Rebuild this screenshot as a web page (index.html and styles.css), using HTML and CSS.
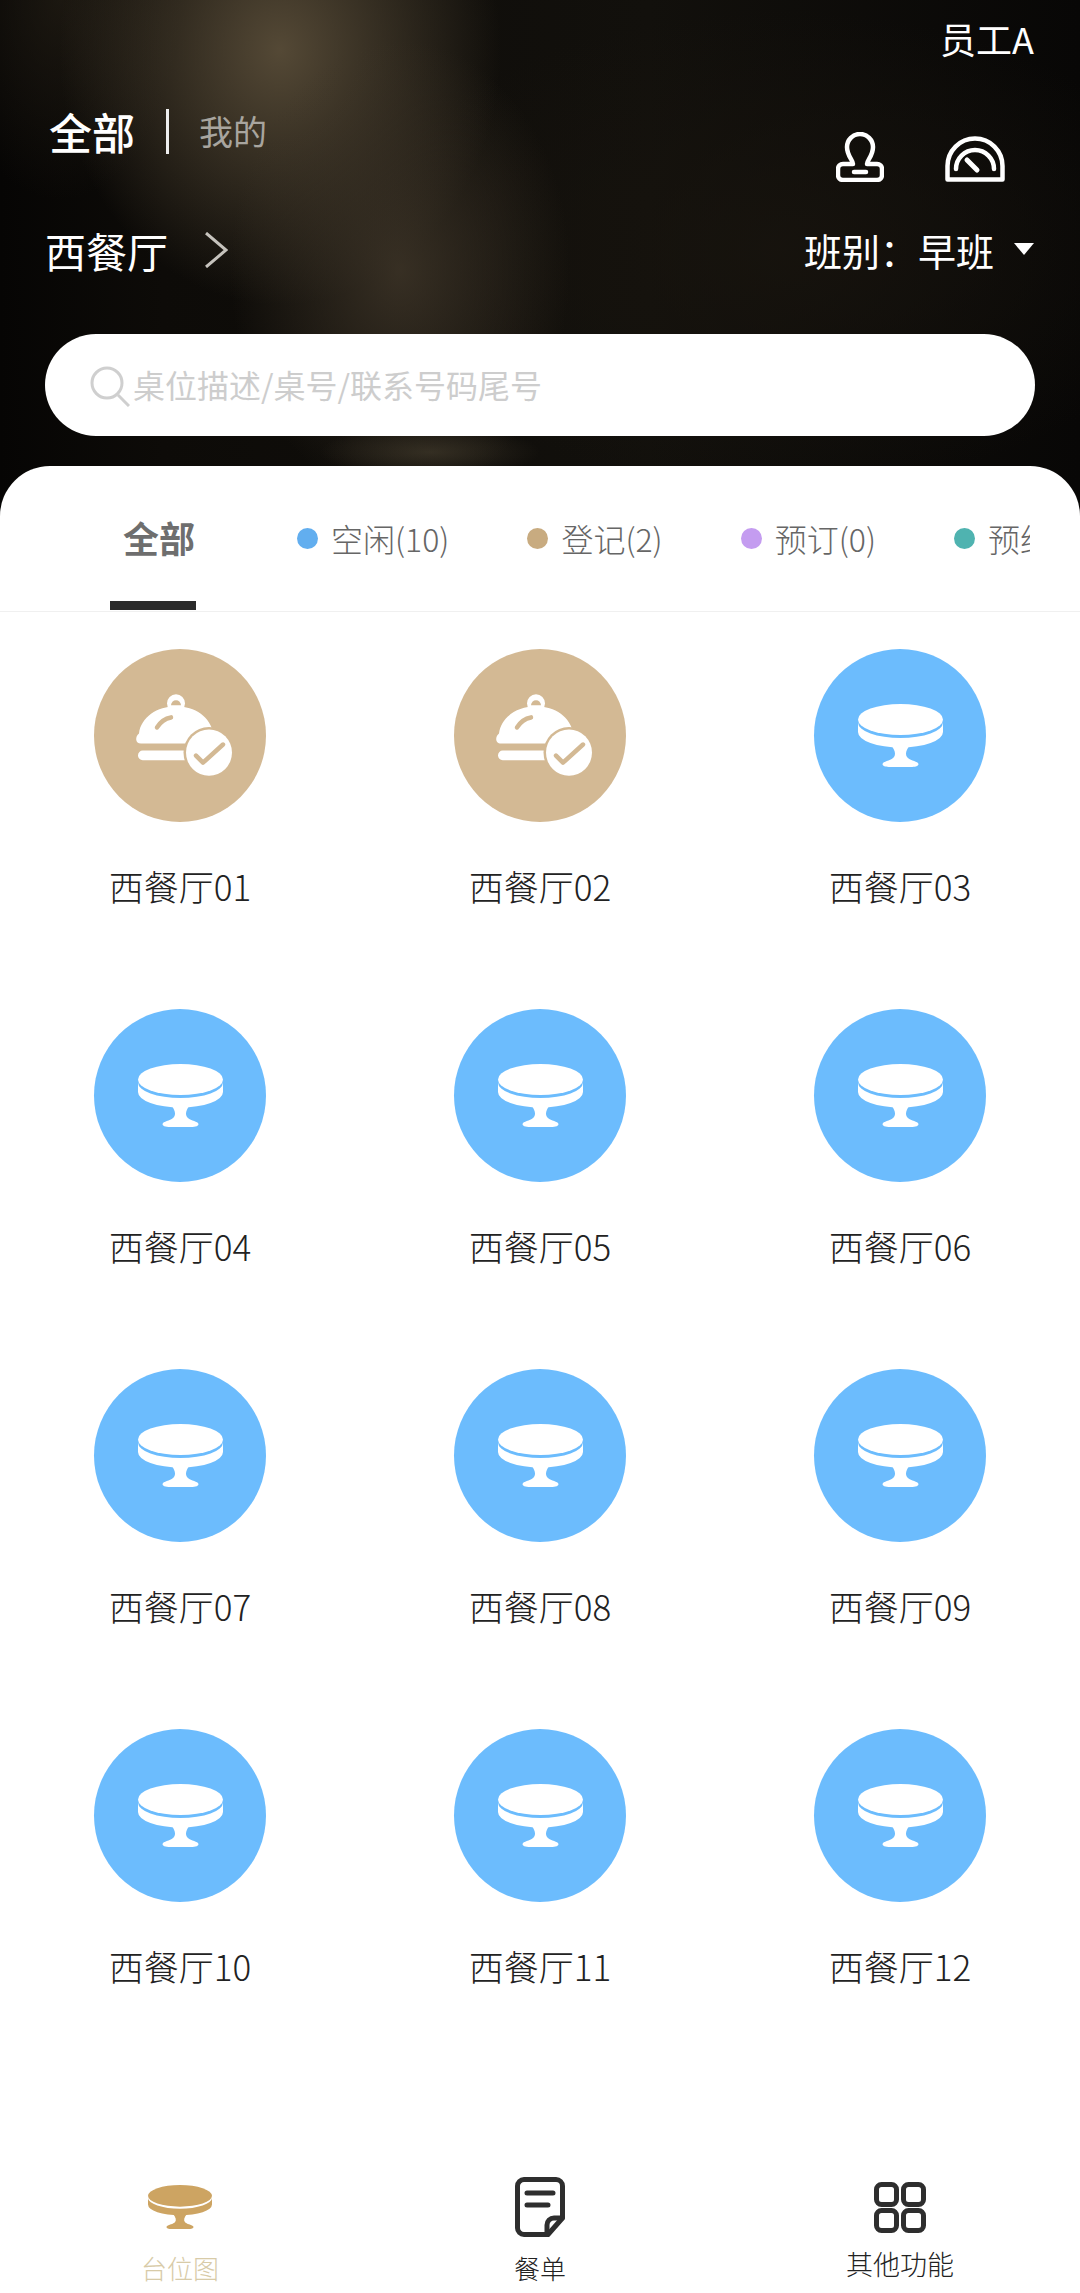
FILE: index.html
```html
<!DOCTYPE html>
<html lang="zh-CN">
<head>
<meta charset="utf-8">
<title>台位图</title>
<link rel="stylesheet" href="styles.css">
</head>
<body>
<svg class="defs" width="0" height="0" aria-hidden="true">
  <symbol id="table" viewBox="0 0 85 63" preserveAspectRatio="none">
    <ellipse cx="42.5" cy="15.5" rx="42.5" ry="15.5" fill="currentColor"/>
    <path fill="currentColor" d="M0 18.500A42.500 15.500 0 0 0 85 18.500V28A42.500 15.500 0 0 1 0 28Z"/>
    <path fill="currentColor" d="M33 41C37 46 38 50 36 53C34 56 27 57 25 59C23 62 28 63 32 63H53C57 63 62 62 60 59C58 57 51 56 49 53C47 50 48 46 52 41Z"/>
  </symbol>
  <symbol id="cloche" viewBox="0 0 172 172" preserveAspectRatio="none">
    <circle cx="86" cy="86" r="86" fill="#d3b994"/>
    <circle cx="82" cy="54" r="9" fill="#fff"/>
    <path fill="#d3b994" d="M77 56a5 5 0 0 1 10 0Z"/>
    <path fill="#fff" d="M47 94C41 94 41 87 45 84C47 68 63 57 82 57C101 57 117 68 119 84C123 87 123 94 117 94Z"/>
    <rect x="44" y="101" width="85" height="9.500" rx="4.700" fill="#fff"/>
    <path fill="none" stroke="#d3b994" stroke-width="4.500" stroke-linecap="round" d="M63 78C66 73 71 69 77 68"/>
    <circle cx="115" cy="103" r="25.500" fill="#d3b994"/>
    <circle cx="115" cy="103" r="23" fill="#fff"/>
    <path fill="none" stroke="#d3b994" stroke-width="4.500" stroke-linecap="round" stroke-linejoin="round" d="M102 106L109 113L129 95"/>
  </symbol>
</svg>

<header class="hero">
  <div class="hero-user">员工A</div>
  <div class="hero-bar">
    <div class="scope">
      <span class="scope-on">全部</span>
      <span class="scope-line"></span>
      <span class="scope-off">我的</span>
    </div>
    <div class="hero-icons">
      <svg class="icon-stamp" viewBox="0 0 48 50" fill="none" stroke="#fff" stroke-width="4.500" stroke-linejoin="round" stroke-linecap="round">
        <path d="M17 32H7a5 5 0 0 0-5 5v6a5 5 0 0 0 5 5h34a5 5 0 0 0 5-5v-6a5 5 0 0 0-5-5H31c0-4 6-8 6-17a13 13 0 0 0-26 0c0 9 6 13 6 17Z"/>
        <path d="M18 40H30"/>
      </svg>
      <svg class="icon-gauge" viewBox="0 0 60 46" fill="none" stroke="#fff" stroke-width="4.500" stroke-linecap="round" stroke-linejoin="round">
        <path d="M2.500 43.500V30a27.500 27.500 0 0 1 55 0V43.500Z"/>
        <path d="M11 33a19 19 0 0 1 38 0"/>
        <path d="M22 24L32 34" stroke-width="5"/>
      </svg>
    </div>
  </div>
  <div class="hero-row">
    <div class="venue">
      <span>西餐厅</span>
      <svg class="venue-arrow" viewBox="0 0 24 36" fill="none" stroke="#c6c3bd" stroke-width="3"><path d="M2 1L22 18L2 35"/></svg>
    </div>
    <div class="shift">
      <span>班别：早班</span>
      <span class="shift-caret"></span>
    </div>
  </div>
  <div class="search">
    <svg class="search-icon" viewBox="0 0 40 42" fill="none" stroke="#cfcfcf" stroke-width="3"><circle cx="17" cy="18" r="15"/><path d="M28 30L39 41"/></svg>
    <span class="search-text">桌位描述/桌号/联系号码尾号</span>
  </div>
</header>

<main class="sheet">
  <nav class="tabs">
    <div class="tabs-inner">
      <div class="tab-all">全部</div>
      <div class="tab"><i class="dot dot-free"></i>空闲(10)</div>
      <div class="tab"><i class="dot dot-checked"></i>登记(2)</div>
      <div class="tab"><i class="dot dot-booked"></i>预订(0)</div>
      <div class="tab"><i class="dot dot-pre"></i>预约(0)</div>
    </div>
  </nav>
  <section class="tables">
    <div class="seat"><svg class="seat-disc"><use href="#cloche"/></svg><div class="seat-name">西餐厅01</div></div>
    <div class="seat"><svg class="seat-disc"><use href="#cloche"/></svg><div class="seat-name">西餐厅02</div></div>
    <div class="seat"><div class="seat-disc seat-free"><svg class="seat-table"><use href="#table"/></svg></div><div class="seat-name">西餐厅03</div></div>
    <div class="seat"><div class="seat-disc seat-free"><svg class="seat-table"><use href="#table"/></svg></div><div class="seat-name">西餐厅04</div></div>
    <div class="seat"><div class="seat-disc seat-free"><svg class="seat-table"><use href="#table"/></svg></div><div class="seat-name">西餐厅05</div></div>
    <div class="seat"><div class="seat-disc seat-free"><svg class="seat-table"><use href="#table"/></svg></div><div class="seat-name">西餐厅06</div></div>
    <div class="seat"><div class="seat-disc seat-free"><svg class="seat-table"><use href="#table"/></svg></div><div class="seat-name">西餐厅07</div></div>
    <div class="seat"><div class="seat-disc seat-free"><svg class="seat-table"><use href="#table"/></svg></div><div class="seat-name">西餐厅08</div></div>
    <div class="seat"><div class="seat-disc seat-free"><svg class="seat-table"><use href="#table"/></svg></div><div class="seat-name">西餐厅09</div></div>
    <div class="seat"><div class="seat-disc seat-free"><svg class="seat-table"><use href="#table"/></svg></div><div class="seat-name">西餐厅10</div></div>
    <div class="seat"><div class="seat-disc seat-free"><svg class="seat-table"><use href="#table"/></svg></div><div class="seat-name">西餐厅11</div></div>
    <div class="seat"><div class="seat-disc seat-free"><svg class="seat-table"><use href="#table"/></svg></div><div class="seat-name">西餐厅12</div></div>
  </section>
</main>

<footer class="dock">
  <div class="dock-item dock-map">
    <svg class="dock-table"><use href="#table"/></svg>
    <span>台位图</span>
  </div>
  <div class="dock-item dock-menu">
    <svg class="dock-note" viewBox="0 0 50 60" fill="none" stroke="#2e2e2e" stroke-width="5" stroke-linecap="round" stroke-linejoin="round">
      <path d="M33 57.500H9a6.500 6.500 0 0 1-6.500-6.500V9A6.500 6.500 0 0 1 9 2.500H41A6.500 6.500 0 0 1 47.500 9V41L33 57.500Z"/>
      <path d="M47 41H39a7 7 0 0 0-7 7V57"/>
      <path d="M12 16H38M12 28H33"/>
    </svg>
    <span>餐单</span>
  </div>
  <div class="dock-item dock-more">
    <svg class="dock-grid" viewBox="0 0 52 51" fill="none" stroke="#2e2e2e" stroke-width="5">
      <rect x="2.500" y="2.500" width="20" height="20" rx="5"/>
      <rect x="29.500" y="2.500" width="20" height="20" rx="5"/>
      <rect x="2.500" y="28.500" width="20" height="20" rx="5"/>
      <rect x="29.500" y="28.500" width="20" height="20" rx="5"/>
    </svg>
    <span>其他功能</span>
  </div>
</footer>
</body>
</html>
```
FILE: styles.css
```css
* { box-sizing: border-box; }

html, body {
  margin: 0;
  padding: 0;
}

body {
  width: 1080px;
  height: 2293px;
  display: flex;
  flex-direction: column;
  overflow: hidden;
  background: #fff;
  font-family: "Noto Sans CJK SC", "Noto Sans", sans-serif;
  color: #333;
}

.defs { display: block; height: 0; }

/* hero */
.hero {
  flex: none;
  height: 520px;
  padding: 16px 46px 0 45px;
  color: #fff;
  background:
    radial-gradient(ellipse 110px 26px at 430px 452px, rgba(72,64,48,.6), transparent),
    radial-gradient(ellipse 170px 230px at 400px 270px, rgba(62,53,40,.85), transparent),
    radial-gradient(ellipse 260px 300px at 280px 50px, rgba(88,76,56,.95), transparent 85%),
    radial-gradient(ellipse 120px 200px at 60px 0, rgba(40,34,24,.6), transparent),
    radial-gradient(ellipse 420px 240px at 780px 250px, rgba(24,20,14,.8), transparent),
    linear-gradient(90deg, #060504 0, #0d0b08 15%, #12100c 60%, #080706 100%);
}

.hero-user {
  height: 44px;
  line-height: 44px;
  font-size: 36px;
  text-align: right;
}

.hero-bar {
  height: 74px;
  margin-top: 48px;
  padding-left: 4px;
  display: flex;
  justify-content: space-between;
}

.scope {
  height: 46px;
  display: flex;
  align-items: center;
}

.scope-on {
  font-size: 43px;
  font-weight: 500;
  line-height: 46px;
}

.scope-line {
  width: 3px;
  height: 45px;
  margin: 0 30px 0 31px;
  background: #eee;
}

.scope-off {
  font-size: 34px;
  line-height: 46px;
  color: #a8a59f;
}

.hero-icons {
  display: flex;
  align-items: flex-end;
  gap: 61px;
  padding-right: 29px;
}

.icon-stamp { width: 48px; height: 50px; }
.icon-gauge { width: 60px; height: 46px; }

.hero-row {
  height: 50px;
  margin-top: 43px;
  display: flex;
  justify-content: space-between;
  align-items: center;
}

.venue {
  display: flex;
  align-items: center;
  gap: 36px;
  font-size: 41px;
  line-height: 50px;
}

.venue-arrow { width: 24px; height: 36px; }

.shift {
  display: flex;
  align-items: center;
  gap: 20px;
  font-size: 38px;
  line-height: 50px;
}

.shift-caret {
  width: 0;
  height: 0;
  margin-top: -2px;
  border-style: solid;
  border-width: 12px 10px 0;
  border-color: #fff transparent transparent;
}

.search {
  height: 102px;
  margin-top: 59px;
  width: 990px;
  padding: 0 0 2px 45px;
  display: flex;
  align-items: center;
  gap: 3px;
  border-radius: 51px;
  background: #fff;
}

.search-icon { width: 40px; height: 42px; margin-top: 4px; }

.search-text {
  font-size: 32px;
  color: #cdcdcd;
}

/* sheet */
.sheet {
  flex: 1;
  min-height: 0;
  margin-top: -54px;
  position: relative;
  border-radius: 50px 50px 0 0;
  background: #fff;
}

.tabs {
  height: 146px;
  padding-bottom: 1px;
  border-bottom: 1px solid #f0f0f0;
}

.tabs-inner {
  height: 144px;
  margin: 0 50px 0 110px;
  display: flex;
  align-items: center;
  gap: 78px;
  overflow: hidden;
}

.tab-all {
  flex: none;
  width: 86px;
  height: 144px;
  margin-right: 23px;
  padding: 7px 0 0 13px;
  border-bottom: 9px solid #2b2b2b;
  display: flex;
  align-items: center;
  font-size: 36px;
  font-weight: 700;
  white-space: nowrap;
  color: #6e6e6e;
}

.tab {
  flex: none;
  display: flex;
  align-items: center;
  font-size: 32px;
  font-weight: 300;
  color: #666;
  white-space: nowrap;
}

.dot {
  width: 21px;
  height: 21px;
  margin-right: 13px;
  border-radius: 50%;
}

.dot-free { background: #62aeef; }
.dot-checked { background: #c8ab80; }
.dot-booked { background: #c49cf0; }
.dot-pre { background: #4fb3b0; }

.tables {
  display: grid;
  grid-template-columns: repeat(3, 360px);
  grid-auto-rows: 360px;
}

.seat {
  padding-top: 37px;
  display: flex;
  flex-direction: column;
  align-items: center;
}

.seat-disc {
  display: block;
  flex: none;
  width: 172px;
  height: 173px;
}

.seat-free {
  padding-top: 55px;
  display: flex;
  justify-content: center;
  border-radius: 50%;
  background: #6cbcfd;
  color: #fff;
}

.seat-table {
  display: block;
  width: 85px;
  height: 63px;
}

.seat-name {
  margin-top: 40px;
  font-size: 35px;
  font-weight: 300;
  line-height: 48px;
  color: #222;
}

/* dock */
.dock {
  flex: none;
  height: 123px;
  display: grid;
  grid-template-columns: repeat(3, 360px);
}

.dock-item {
  display: flex;
  flex-direction: column;
  align-items: center;
  font-size: 26px;
  font-weight: 300;
  line-height: 36px;
  color: #222;
}

.dock-map {
  padding-top: 15px;
  color: #d8cba8;
}

.dock-table {
  display: block;
  width: 64px;
  height: 44px;
  margin-bottom: 21px;
  color: #cda462;
}

.dock-menu { padding-top: 7px; }

.dock-note {
  display: block;
  width: 50px;
  height: 60px;
  margin-bottom: 13px;
}

.dock-more {
  padding-top: 12px;
  font-size: 27px;
}

.dock-grid {
  display: block;
  width: 52px;
  height: 51px;
  margin-bottom: 13px;
}
```
